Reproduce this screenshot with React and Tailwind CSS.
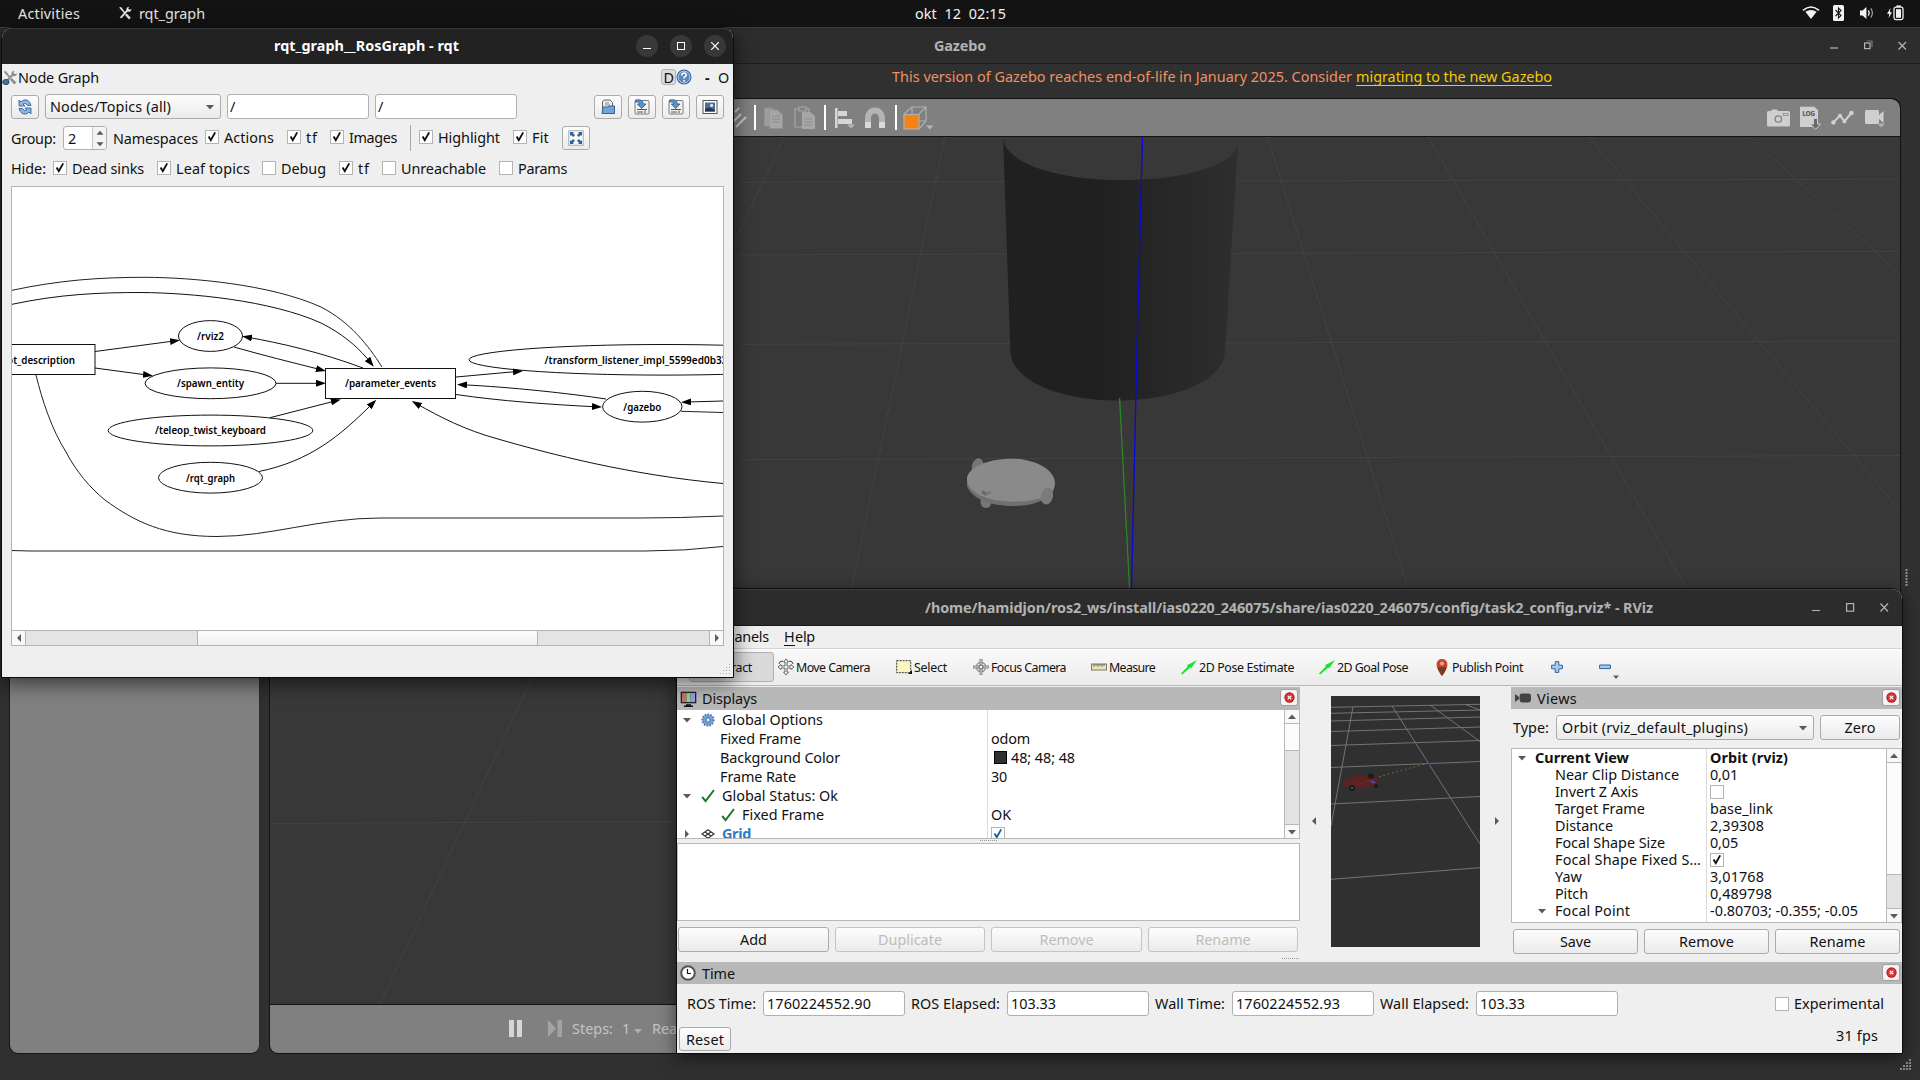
import React, { useLayoutEffect, useRef, useState } from "react";

/* Text run whose tracking is tuned so that it fills exactly `w` pixels. */
function Label({ w, className = "", children }) {
  const ref = useRef(null);
  const [spacing, setSpacing] = useState(0);
  useLayoutEffect(() => {
    const natural = ref.current.getBoundingClientRect().width;
    setSpacing((w - natural) / String(children).length);
  }, [w, children]);
  return (
    <span className={`block shrink-0 whitespace-pre ${className}`} style={{ width: w }}>
      <span ref={ref} style={{ letterSpacing: spacing }}>{children}</span>
    </span>
  );
}

/* ---------- small shared widgets ---------- */

function Check({ on, blue }) {
  return (
    <span className="block h-[14px] w-[14px] shrink-0 border border-[#b4b4b4] bg-white">
      {on && (
        <svg viewBox="0 0 12 12" className="block h-3 w-3">
          <path d="M2.6 5.4 L4.8 9.2 L9.2 1.4" fill="none" stroke={blue ? "#1f5fa8" : "#111"} strokeWidth="1.9" />
        </svg>
      )}
    </span>
  );
}

function CheckItem({ on, w, className = "", children }) {
  return (
    <div className={`mb-[2px] flex shrink-0 items-center gap-[5px] ${className}`}>
      <Check on={on} />
      <Label w={w}>{children}</Label>
    </div>
  );
}

function Tri({ dir = "down", className = "", color = "#5a5a5a" }) {
  const d = { down: "M0 2H8L4 6.5Z", up: "M0 6H8L4 1.5Z", left: "M6 0V8L2 4Z", right: "M2 0V8L6 4Z" }[dir];
  return (
    <svg viewBox="0 0 8 8" className={`block h-2 w-2 shrink-0 ${className}`}>
      <path d={d} fill={color} />
    </svg>
  );
}

function Button({ w, className = "", disabled, children }) {
  return (
    <div className={`flex shrink-0 items-center justify-center rounded-[3px] border bg-gradient-to-b from-[#fdfdfd] to-[#ebebeb] ${disabled ? "border-[#c4c4c4] text-[#bdbdbd]" : "border-[#ababab]"} ${className}`}>
      {w ? <Label w={w}>{children}</Label> : children}
    </div>
  );
}

function Field({ w, className = "", children }) {
  return (
    <div className={`flex h-[25px] shrink-0 items-center rounded-[3px] border border-[#b0b0b0] bg-white ${className}`}>
      <Label w={w}>{children}</Label>
    </div>
  );
}

function CloseBadge({ className = "" }) {
  return (
    <div className={`flex h-[17px] w-[18px] shrink-0 items-center justify-center rounded-[3px] border border-[#a0a0a0] bg-[#f4f4f4] ${className}`}>
      <svg viewBox="0 0 12 12" className="h-[11px] w-[11px]">
        <circle cx="6" cy="6" r="5.6" fill="#c4161c" />
        <circle cx="6" cy="6" r="4.4" fill="#d8393c" />
        <path d="M4.2 4.2L7.8 7.8M7.8 4.2L4.2 7.8" stroke="#fff" strokeWidth="1.3" />
      </svg>
    </div>
  );
}

function Tools({ className = "", light }) {
  const c = light ? "#e4e4e4" : "#8b8b8b";
  return (
    <svg viewBox="0 0 16 16" className={`block shrink-0 ${className}`} fill="none">
      <path d="M3 13.6L11 4.6" stroke={c} strokeWidth="2.2" />
      <path d="M9.6 4Q9.6 .8 13 .8L11.6 2.6L13.2 4.4L15.4 3.4Q15 6.8 12 6.6Q10 6.4 9.6 4Z" fill={c} />
      <path d="M1.2 1.8L3.6 1L8 7L7 8.2Z" fill={c} />
      <path d="M9 9.4L13.6 14.4" stroke={c} strokeWidth="2.8" />
      {!light && <ellipse cx="3.6" cy="12.8" rx="3.4" ry="2.8" fill="#47709f" stroke="#284a73" />}
    </svg>
  );
}

/* ---------- top panel ---------- */

function TopBar() {
  return (
    <header className="absolute inset-x-0 top-0 flex h-[27px] items-center bg-[#131313] pb-[1px] text-[#e6e6e6]">
      <Label w={62} className="ml-[18px]">Activities</Label>
      <Tools light className="ml-[38px] h-[14px] w-[14px]" />
      <Label w={66} className="ml-[7px]">rqt_graph</Label>
      <Label w={91} className="ml-[710px] text-[#f2f2f2]">{"okt  12  02:15"}</Label>
      <svg viewBox="0 0 18 14" className="ml-[796px] h-[14px] w-[18px] shrink-0">
        <path d="M1 4.4Q9 -2.4 17 4.4" fill="none" stroke="#f2f2f2" strokeWidth="1.5" />
        <path d="M3.4 5.8Q9 2 14.6 5.8L9 13Z" fill="#f2f2f2" />
      </svg>
      <svg viewBox="0 0 11 16" className="ml-[13px] h-4 w-[11px] shrink-0">
        <rect width="11" height="16" rx="1.5" fill="#f2f2f2" />
        <path d="M2.5 5L8 10.6L5.5 13V3L8 5.4L2.5 11" fill="none" stroke="#131313" strokeWidth="1.1" />
      </svg>
      <svg viewBox="0 0 16 14" className="ml-[15px] h-[14px] w-4 shrink-0">
        <path d="M1 4.6H3.6L7.4 1V13L3.6 9.4H1Z" fill="#f2f2f2" />
        <path d="M9.4 4.4Q11 7 9.4 9.6" fill="none" stroke="#f2f2f2" strokeWidth="1.3" />
        <path d="M11.8 2.4Q15 7 11.8 11.6" fill="none" stroke="#9a9a9a" strokeWidth="1.3" />
      </svg>
      <svg viewBox="0 0 17 16" className="ml-[12px] h-4 w-[17px] shrink-0">
        <path d="M3.6 3L0 8.8H2.2L1.6 13L5 7.2H2.8Z" fill="#f2f2f2" />
        <rect x="7" y="2.2" width="9" height="12.4" rx="1.8" fill="none" stroke="#f2f2f2" strokeWidth="1.3" />
        <rect x="9" y="4.2" width="5" height="8.6" fill="#f2f2f2" />
        <rect x="9.4" y="0.4" width="4.4" height="1.6" fill="#f2f2f2" />
      </svg>
    </header>
  );
}

/* ---------- Gazebo ---------- */

const GRID_LINES = [
  [740, 182.3, 1900, 179.2], [740, 254.9, 1900, 251.3], [740, 344.3, 1900, 341], [740, 459.7, 1900, 455.5],
  [270, 823.6, 680, 821.4],
  [1267.6, 137, 1407.7, 587], [1428.4, 137, 1685.5, 587], [1589, 137, 1900, 511], [1749.5, 137, 1900, 274],
  [944.8, 137, 852, 587], [783.8, 137, 380, 1004],
];

function GazeboScene() {
  return (
    <svg viewBox="270 137 1630 867" className="block h-[867px] w-full shrink-0">
      <defs>
        <linearGradient id="drum" x1="0" x2="1">
          <stop offset="0.4" stopColor="#202020" />
          <stop offset="1" stopColor="#2e2e2e" />
        </linearGradient>
      </defs>
      <rect x="270" y="137" width="1630" height="867" fill="#383838" />
      {GRID_LINES.map(([a, b, c, d], i) => (
        <line key={i} x1={a} y1={b} x2={c} y2={d} stroke="#434343" />
      ))}
      <path d="M1003 138C1006 164 1058 180 1122 180C1188 180 1236 164 1238 143L1225 353C1222 381 1175 400.5 1118 400.5C1060 400.5 1013 381 1010.5 353Z" fill="url(#drum)" />
      <line x1="1119.6" y1="398" x2="1129.5" y2="588" stroke="#2a8a2a" strokeWidth="1.2" />
      <path d="M1142.5 137L1137.2 340L1131.5 588" fill="none" stroke="#0909d8" strokeWidth="1.3" />
      <ellipse cx="977.5" cy="466" rx="5.5" ry="8" fill="#757575" transform="rotate(18 977.5 466)" />
      <ellipse cx="986" cy="502" rx="5.5" ry="6" fill="#777" />
      <path d="M967 480V486C972 499 990 506 1014 506C1032 506 1050 500 1054 489V480Z" fill="#707070" />
      <path d="M967 480C966 468 987 458.7 1011 458.7C1035 458.7 1055 470 1055 483C1055 495 1040 501.7 1014 501.7C988 501.7 968 493 967 480Z" fill="#8a8a8a" />
      <path d="M982 490L986.5 492.5V496L982 493.5Z" fill="#666" />
      <path d="M986.5 492.5L991 490V493.5L986.5 496Z" fill="#787878" />
      <ellipse cx="1047" cy="496" rx="6" ry="8.6" fill="#7b7b7b" transform="rotate(14 1047 496)" />
    </svg>
  );
}

function GazeboToolbar() {
  const sep = "h-[25px] w-[2px] shrink-0 bg-white";
  return (
    <div className="flex h-[37px] shrink-0 items-center rounded-tr-[9px] bg-[#808080]">
      <svg viewBox="0 0 16 24" className="ml-[461px] h-6 w-4 shrink-0" stroke="#c8c8c8" strokeWidth="2">
        <path d="M4 6L8 2M3 15L10 8M5 21L15 11" />
      </svg>
      <div className={`ml-[7px] ${sep}`} />
      <svg viewBox="0 0 19 22" className="ml-[8px] h-[22px] w-[19px] shrink-0" fill="#9d9d9d" stroke="#929292" strokeWidth=".6">
        <path d="M.5 1H8L12 4V19H.5Z" /><path d="M5.5 3H13L18.5 7.5V21.5H5.5Z" fill="#a6a6a6" />
        <path d="M8 9H16M8 12H16M8 15H16" stroke="#8c8c8c" strokeWidth="1" />
      </svg>
      <svg viewBox="0 0 22 24" className="ml-[11px] h-6 w-[22px] shrink-0" fill="none" stroke="#a6a6a6" strokeWidth="1.2">
        <path d="M1 3H5V5H12V3H15V21H1ZM5 1H12V5H5Z" />
        <path d="M8.5 6.5H16L20.5 10.5V22.5H8.5Z" fill="#a6a6a6" /><path d="M10.5 13H18M10.5 16H18M10.5 19H18" stroke="#8e8e8e" />
      </svg>
      <div className={`ml-[8px] ${sep}`} />
      <svg viewBox="0 0 20 22" className="ml-[9px] h-[22px] w-5 shrink-0" fill="#d6d6d6">
        <path d="M0 1H2.5V21H0ZM3 4H12V9H3ZM3 12H17V17H3Z" /><path d="M12 17.5H20L16 21.5Z" fill="#b6b6b6" />
      </svg>
      <svg viewBox="0 0 22 22" className="ml-[9px] h-[22px] w-[22px] shrink-0" fill="none">
        <path d="M4 19.5V11A7 7.6 0 0 1 18 11V19.5" stroke="#b4b4b4" strokeWidth="6" />
        <path d="M4 15V21M18 15V21" stroke="#dadada" strokeWidth="6" />
      </svg>
      <div className={`ml-[9px] ${sep}`} />
      <svg viewBox="0 0 31 24" className="ml-[6px] h-6 w-[31px] shrink-0" fill="none" stroke="#b0b0b0" strokeWidth="1.2">
        <path d="M1 8L9 1H23V15L16 23M16 8L23 1M9 1V15H23M9 15L1 23" />
        <rect x="1" y="8.5" width="15" height="14.5" fill="#f58212" />
        <path d="M23 19.5H30.5L26.7 23.5Z" fill="#b6b6b6" stroke="none" />
      </svg>
      <div className="flex-1" />
      <svg viewBox="0 0 23 18" className="h-[18px] w-[23px] shrink-0">
        <path d="M0 3.5Q0 2 1.5 2H4L5 .4H10L11 2H21.5Q23 2 23 3.5V16Q23 17.6 21.5 17.6H1.5Q0 17.6 0 16Z" fill="#cfcfcf" />
        <circle cx="11.3" cy="10" r="3.2" fill="none" stroke="#808080" strokeWidth="1.3" /><rect x="16" y="4.4" width="5" height="2.2" fill="none" stroke="#8a8a8a" strokeWidth=".8" />
      </svg>
      <svg viewBox="0 0 21 24" className="ml-[10px] h-6 w-[21px] shrink-0">
        <path d="M0 .8H14L18 4V21H0Z" fill="#cfcfcf" />
        <text x="2.2" y="9.6" fontFamily="Noto Sans" fontWeight="800" fontSize="6.6" fill="#606060" textLength="13">LOG</text>
        <path d="M13.5 12.5H17.5V18H20.5L15.5 23.5L10.5 18H13.5Z" fill="#6a6a6a" stroke="#cfcfcf" strokeWidth="1" />
      </svg>
      <svg viewBox="0 0 23 16" className="ml-[10px] h-4 w-[23px] shrink-0" fill="none" stroke="#d2d2d2" strokeWidth="2">
        <path d="M2.4 12.4L9 5.6L13.4 11.4L20.4 3" /><g fill="#d2d2d2" stroke="none"><circle cx="2.4" cy="12.4" r="2.2" /><circle cx="9" cy="5.6" r="1.9" /><circle cx="13.4" cy="11.4" r="1.9" /><circle cx="20.4" cy="3" r="2.2" /></g>
      </svg>
      <svg viewBox="0 0 21 20" className="mr-[14px] ml-[11px] mt-[3px] h-5 w-[21px] shrink-0" fill="#cfcfcf">
        <rect x="0" y="1" width="14" height="14" rx="1.5" /><path d="M13 7L18.5 2V14L13 9Z" /><path d="M12.5 14.5H20L16.2 18.5Z" fill="#b0b0b0" />
      </svg>
    </div>
  );
}

function GazeboWindow() {
  return (
    <section className="absolute inset-x-0 top-[27px] bottom-0 flex flex-col bg-[#303030]">
      <div className="flex h-[37px] shrink-0 items-center border-t border-b border-t-[#3c3c3c] border-b-[#1d1d1d] bg-[#2d2d2d] pb-[1px] text-[#b2b2b2]">
        <Label w={52} className="ml-[934px] font-bold">Gazebo</Label>
        <svg viewBox="0 0 80 14" className="ml-[844px] h-[14px] w-20 shrink-0" fill="none" stroke="#b4b4b4" strokeWidth="1.2">
          <path d="M0 10H8" /><rect x="34.6" y="5" width="5.4" height="5.6" /><path d="M37 3H42V9" stroke="#777" /><path d="M68.5 4L76 11.5M76 4L68.5 11.5" />
        </svg>
      </div>
      <div className="flex h-[34px] shrink-0 pt-[3px] text-[#f09060]">
        <Label w={460} className="ml-[892px]">This version of Gazebo reaches end-of-life in January 2025. Consider</Label>
        <Label w={196} className="ml-[4px] text-[#f0cc00] underline underline-offset-[3px]">migrating to the new Gazebo</Label>
      </div>
      <div className="flex min-h-0 flex-1">
        <div className="ml-[9px] h-[956px] w-[251px] shrink-0 rounded-b-[9px] border border-[#171717] border-r-[#2b2b2b] bg-[#808080]" />
        <div className="ml-[9px] flex h-[956px] w-[1632px] shrink-0 flex-col gap-px overflow-hidden rounded-tr-[9px] rounded-bl-[9px] border border-[#131313] bg-[#131313]">
          <GazeboToolbar />
          <GazeboScene />
          <div className="flex h-[48px] shrink-0 items-center bg-[#808080] pb-[2px] text-[#c4c4c4]">
            <div className="ml-[239px] flex gap-[3px]"><i className="h-[17px] w-[5px] bg-[#d6d6d6]" /><i className="h-[17px] w-[5px] bg-[#d6d6d6]" /></div>
            <svg viewBox="0 0 14 17" className="ml-[26px] h-[17px] w-[14px]" fill="#a3a3a3"><path d="M0 0L8 8.5L0 17ZM9.5 0H14V17H9.5Z" /></svg>
            <Label w={41} className="ml-[10px]">Steps:</Label>
            <Label w={7} className="ml-[9px]">1</Label>
            <Tri className="ml-[5px] mt-[6px]" color="#b0b0b0" />
            <Label w={25} className="ml-[10px]">Rea</Label>
          </div>
        </div>
        <svg viewBox="0 0 18 956" className="h-[956px] w-[18px] shrink-0 overflow-visible">
          <path d="M5.5 471V488" stroke="#909090" strokeWidth="2" strokeDasharray="2 1" />
          <g fill="#8a8a8a">
            <path d="M8 961h2v2h-2zM5 964h2v2h-2zM8 964h2v2h-2zM2 967h2v2h-2zM5 967h2v2h-2zM8 967h2v2h-2zM-1 970h2v2h-2zM2 970h2v2h-2zM5 970h2v2h-2zM8 970h2v2h-2z" />
          </g>
        </svg>
      </div>
    </section>
  );
}

/* ---------- RViz ---------- */

const SPRITES = {
  move: <g fill="none" stroke="#444" strokeWidth="1"><path d="M8 0L10.5 3H9V7H13V5.5L16 8L13 10.5V9H9V13H10.5L8 16L5.5 13H7V9H3V10.5L0 8L3 5.5V7H7V3H5.5Z" fill="#f4f4f4" strokeWidth=".8" /><path d="M1 5Q1 2 5 2M15 5Q15 2 11 2" /></g>,
  select: <g><rect x=".7" y="1.7" width="14" height="12" fill="#fdf5c0" stroke="#333" strokeDasharray="2 1" /><path d="M16 11V15H12Z" fill="#111" /></g>,
  focus: <g fill="none" stroke="#777" strokeWidth="1.1"><circle cx="8" cy="8" r="4.6" /><circle cx="8" cy="8" r="2" /><path d="M7 0H9V6H7ZM7 10H9V16H7ZM0 7H6V9H0ZM10 7H16V9H10Z" fill="#ddd" strokeWidth=".9" /></g>,
  measure: <g><rect x=".5" y="5" width="15" height="6" fill="#eee3b0" stroke="#777" /><path d="M3 5V8M5 5V7M7 5V8M9 5V7M11 5V8M13 5V7" stroke="#555" strokeWidth=".8" /></g>,
  arrow: <path d="M0 14.6L6.8 7.4L6 6.2L16 1L10.2 9.2L9.2 8.4L1.2 15.4Z" fill="#17e32c" />,
};

function Sprite({ name, className = "" }) {
  return <svg viewBox="0 0 16 16" className={`block h-4 w-4 shrink-0 ${className}`}>{SPRITES[name]}</svg>;
}

const TOOLS = [
  { icon: "move", text: "Move Camera", w: 74, next: "mr-[26px]" },
  { icon: "select", text: "Select", w: 33, next: "mr-[26px]" },
  { icon: "focus", text: "Focus Camera", w: 75, next: "mr-[25px]" },
  { icon: "measure", text: "Measure", w: 46, next: "mr-[26px]" },
  { icon: "arrow", text: "2D Pose Estimate", w: 95, next: "mr-[25px]" },
  { icon: "arrow", text: "2D Goal Pose", w: 71, next: "mr-[28px]" },
];

function RvizToolbar() {
  return (
    <div className="flex h-[38px] shrink-0 items-center border-t border-b border-t-[#d4d4d4] border-b-[#b8b8b8] bg-gradient-to-b from-[#fafafa] to-[#ebebeb] text-[12.4px]">
      <div className="mr-[4px] ml-[12px] flex h-[30px] w-[85px] shrink-0 items-center rounded-[3px] border border-[#b0b0b0] bg-[#dadada]">
        <Label w={43} className="ml-[19px]">Interact</Label>
      </div>
      {TOOLS.map((t) => (
        <div key={t.text} className={`flex shrink-0 items-center gap-[2px] ${t.next}`}>
          <Sprite name={t.icon} />
          <Label w={t.w}>{t.text}</Label>
        </div>
      ))}
      <svg viewBox="0 0 12 17" className="h-[17px] w-3 shrink-0">
        <path d="M6 17Q0 9 .6 5A5.4 5 0 0 1 11.4 5Q12 9 6 17Z" fill="#c0472b" /><path d="M6 17Q2 12 1.6 8H10.4Q10 12 6 17Z" fill="#7c3a1e" /><circle cx="6" cy="4.6" r="2" fill="#f0a08a" />
      </svg>
      <Label w={71} className="ml-[4px]">Publish Point</Label>
      <svg viewBox="0 0 12 12" className="ml-[28px] h-3 w-3 shrink-0"><path d="M4.2 .6H7.8V4.2H11.4V7.8H7.8V11.4H4.2V7.8H.6V4.2H4.2Z" fill="#a9c8e8" stroke="#3465a4" /></svg>
      <svg viewBox="0 0 12 12" className="ml-[36px] h-3 w-3 shrink-0"><path d="M.6 4H11.4V7.6H.6Z" fill="#a9c8e8" stroke="#3465a4" /></svg>
      <Tri className="ml-[1px] mt-[20px] scale-75" />
    </div>
  );
}

function ScrollV({ thumb }) {
  const cap = "flex h-[14px] shrink-0 items-center justify-center bg-[#f8f8f8]";
  return (
    <div className="flex w-[15px] shrink-0 flex-col border-l border-[#b8b8b8] bg-[#e3e3e3]">
      <div className={`${cap} border-b border-[#b8b8b8]`}><Tri dir="up" /></div>
      <div className={`shrink-0 border-b border-[#b8b8b8] bg-[#fbfbfb] ${thumb}`} />
      <div className="flex-1" />
      <div className={`${cap} border-t border-[#b8b8b8]`}><Tri /></div>
    </div>
  );
}

function Tick({ className = "" }) {
  return <svg viewBox="0 0 14 14" className={`block h-[14px] w-[14px] shrink-0 ${className}`}><path d="M1.2 8L4.6 12.2L13 1" fill="none" stroke="#1d7a2a" strokeWidth="2" /></svg>;
}

function Gear() {
  return (
    <svg viewBox="0 0 14 14" className="ml-[10px] block h-[14px] w-[14px] shrink-0">
      <circle cx="7" cy="7" r="5.6" fill="#7ba3d4" stroke="#4a78b4" strokeWidth="2" strokeDasharray="1.6 1.2" />
      <circle cx="7" cy="7" r="2.2" fill="#e4eefa" stroke="#3465a4" />
    </svg>
  );
}

function GridIcon() {
  return (
    <svg viewBox="0 0 14 12" className="ml-[10px] block h-3 w-[14px] shrink-0" fill="none" stroke="#333" strokeWidth="1.2">
      <path d="M7 1.8L13 6L7 10.2L1 6ZM4 3.9L10 8.1M10 3.9L4 8.1" />
    </svg>
  );
}

function TreeRow({ left, right, className = "h-[19px]", split = "w-[311px]" }) {
  return (
    <div className={`flex shrink-0 ${className}`}>
      <div className={`flex shrink-0 items-center border-r border-[#dadada] ${split}`}>{left}</div>
      <div className="flex items-center pl-[3px]">{right}</div>
    </div>
  );
}

function DisplaysPanel() {
  const text = "ml-[43px]";
  return (
    <div className="flex w-[623px] shrink-0 flex-col">
      <div className="flex h-[23px] shrink-0 items-center bg-[#b8b8b8]">
        <svg viewBox="0 0 17 16" className="ml-[3px] h-4 w-[17px]">
          <rect x=".7" y=".7" width="15.6" height="11.6" fill="#222" /><rect x="2" y="2" width="4.4" height="9" fill="#d06a70" /><rect x="6.4" y="2" width="4.2" height="9" fill="#86d88a" /><rect x="10.6" y="2" width="4.4" height="9" fill="#9a9af0" /><path d="M6 14H11M4 15.3H13" stroke="#111" strokeWidth="1.4" />
        </svg>
        <Label w={55} className="ml-[5px]">Displays</Label>
        <div className="flex-1" />
        <CloseBadge className="mr-[2px] mb-[3px]" />
      </div>
      <div className="flex h-[129px] shrink-0 border-r border-b border-[#b8b8b8] bg-white">
        <div className="flex flex-1 flex-col overflow-hidden">
          <TreeRow left={<><Tri className="ml-[6px]" /><Gear /><Label w={101} className="ml-[7px]">Global Options</Label></>} />
          <TreeRow left={<Label w={81} className={text}>Fixed Frame</Label>} right={<Label w={39}>odom</Label>} />
          <TreeRow left={<Label w={120} className={text}>Background Color</Label>} right={<><i className="ml-[3px] mr-[4px] h-[13px] w-[13px] border border-black bg-[#303030]" /><Label w={64}>48; 48; 48</Label></>} />
          <TreeRow left={<Label w={76} className={text}>Frame Rate</Label>} right={<Label w={16}>30</Label>} />
          <TreeRow left={<><Tri className="ml-[6px]" /><Tick className="ml-[10px]" /><Label w={116} className="ml-[7px]">Global Status: Ok</Label></>} />
          <TreeRow left={<><Tick className="ml-[44px]" /><Label w={82} className="ml-[7px]">Fixed Frame</Label></>} right={<Label w={20}>OK</Label>} />
          <TreeRow left={<><Tri dir="right" className="ml-[6px]" /><GridIcon /><Label w={29} className="ml-[7px] font-bold text-[#2a7ac8]">Grid</Label></>} right={<Check on blue />} />
        </div>
        <ScrollV thumb="h-[27px]" />
      </div>
      <div className="mx-auto mt-[1px] h-px w-[17px] shrink-0 border-t border-dotted border-[#999]" />
      <div className="mt-[2px] h-[78px] shrink-0 border border-[#b8b8b8] bg-white" />
      <div className="mt-[6px] flex h-[25px] shrink-0 gap-[6px] px-[1px]">
        <Button w={27} className="w-[151px]">Add</Button>
        <Button w={64} disabled className="w-[150px]">Duplicate</Button>
        <Button w={54} disabled className="w-[151px]">Remove</Button>
        <Button w={55} disabled className="w-[150px]">Rename</Button>
      </div>
      <div className="mt-[6px] mr-[1px] ml-auto h-px w-[17px] shrink-0 border-t border-dotted border-[#999]" />
    </div>
  );
}

const ORBIT_LINES = [
  [0, 11.3, 149, 8.3], [0, 17.3, 149, 14], [0, 25, 149, 21], [0, 35.5, 149, 31], [0, 49.5, 149, 44.5],
  [0, 71.5, 149, 65.5], [0, 108, 149, 100.5], [0, 183.3, 149, 171.7],
  [22, 11, 0, 130], [61, 10, 149, 148], [99, 9, 149, 45.5], [135, 8.7, 149, 14],
];

function OrbitView() {
  return (
    <div className="flex w-[211px] shrink-0">
      <Tri dir="left" className="mx-[10px] mt-[130px]" />
      <svg viewBox="0 0 149 251" className="mt-[9px] ml-[3px] block h-[251px] w-[149px] shrink-0 bg-[#303030]">
        {ORBIT_LINES.map(([a, b, c, d], i) => (
          <line key={i} x1={a} y1={b} x2={c} y2={d} stroke="#7c7c7c" strokeWidth=".9" />
        ))}
        <path d="M48 80.7L97.5 67" stroke="#80783a" strokeDasharray="1.5 3" />
        <path d="M96.5 66.5L99 69" stroke="#3a3ac0" strokeWidth="1.2" />
        <ellipse cx="29.5" cy="86" rx="17" ry="6.6" fill="#5c2223" transform="rotate(-6 29.5 86)" />
        <ellipse cx="40" cy="80" rx="3" ry="2.8" fill="#1a1a1a" /><ellipse cx="21" cy="92" rx="3" ry="3" fill="#1a1a1a" /><circle cx="45" cy="90" r="2" fill="#1a1a1a" />
        <path d="M26 88L41 84" stroke="#8a4038" strokeDasharray="1 2" /><path d="M20 92h2" stroke="#2c2" /><path d="M40 85l4 2" stroke="#4455cc" strokeWidth="1.6" />
      </svg>
      <Tri dir="right" className="mt-[130px] ml-[13px]" />
    </div>
  );
}

const VIEW_ROWS = [
  ["Near Clip Distance", 124, "0,01", 28],
  ["Invert Z Axis", 83, false],
  ["Target Frame", 90, "base_link", 63],
  ["Distance", 58, "2,39308", 54],
  ["Focal Shape Size", 110, "0,05", 28],
  ["Focal Shape Fixed S…", 146, true],
  ["Yaw", 27, "3,01768", 54],
  ["Pitch", 33, "0,489798", 62],
];

function ViewsPanel() {
  const row = "h-[17px]";
  const split = "w-[195px]";
  return (
    <div className="flex w-[391px] shrink-0 flex-col">
      <div className="flex h-[22px] shrink-0 items-center bg-[#b8b8b8]">
        <svg viewBox="0 0 16 10" className="ml-[4px] h-[10px] w-4" fill="#444"><path d="M0 1L4 4V6L0 9Z" /><rect x="4.6" y=".6" width="11.4" height="8.8" rx="2.4" /></svg>
        <Label w={40} className="ml-[6px]">Views</Label>
        <div className="flex-1" />
        <CloseBadge className="mr-[2px] mb-[2px]" />
      </div>
      <div className="mt-[6px] flex h-[25px] shrink-0 items-center pl-[2px]">
        <Label w={36}>Type:</Label>
        <div className="ml-[7px] flex h-[25px] w-[258px] items-center rounded-[3px] border border-[#ababab] bg-gradient-to-b from-[#fdfdfd] to-[#ebebeb]">
          <Label w={186} className="ml-[5px]">Orbit (rviz_default_plugins)</Label>
          <div className="flex-1" />
          <Tri className="mr-[6px]" />
        </div>
        <Button w={31} className="ml-[6px] h-[25px] w-[80px]">Zero</Button>
      </div>
      <div className="mt-[8px] flex h-[175px] shrink-0 border border-[#b8b8b8] bg-white">
        <div className="flex flex-1 flex-col overflow-hidden">
          <TreeRow className="h-[17px]" split={split} left={<><Tri className="ml-[6px]" /><Label w={94} className="ml-[9px] font-bold">Current View</Label></>} right={<Label w={78} className="font-bold">Orbit (rviz)</Label>} />
          {VIEW_ROWS.map(([name, w, value, vw]) => (
            <TreeRow key={name} className={row} split={split} left={<Label w={w} className="ml-[43px]">{name}</Label>} right={typeof value === "boolean" ? <Check on={value} /> : <Label w={vw}>{value}</Label>} />
          ))}
          <TreeRow className="h-[17px]" split={split} left={<><Tri className="ml-[26px]" /><Label w={75} className="ml-[9px]">Focal Point</Label></>} right={<Label w={148}>-0.80703; -0.355; -0.05</Label>} />
          <TreeRow className="h-[3px]" split={split} />
        </div>
        <ScrollV thumb="h-[112px]" />
      </div>
      <div className="mt-[6px] flex h-[25px] shrink-0 gap-[6px] pl-[2px]">
        <Button w={31} className="w-[125px]">Save</Button>
        <Button w={55} className="w-[125px]">Remove</Button>
        <Button w={56} className="w-[125px]">Rename</Button>
      </div>
    </div>
  );
}

function RvizWindow() {
  return (
    <section className="absolute top-[588px] left-[676px] flex h-[466px] w-[1227px] flex-col overflow-hidden rounded-t-[11px] border border-[#0c0c0c] bg-[#efefef] shadow-[0_4px_18px_rgba(0,0,0,0.5)]">
      <div className="flex h-[36px] shrink-0 items-center border-t border-[#3e3e3e] bg-[#2c2c2c] pb-[1px] text-[#b2b2b2]">
        <Label w={728} className="ml-[248px] font-bold">/home/hamidjon/ros2_ws/install/ias0220_246075/share/ias0220_246075/config/task2_config.rviz* - RViz</Label>
        <svg viewBox="0 0 80 14" className="ml-[159px] h-[14px] w-20 shrink-0" fill="none" stroke="#b4b4b4" strokeWidth="1.2">
          <path d="M0 10.5H8" /><rect x="34.6" y="3.6" width="7" height="7.6" /><path d="M68.5 3.5L76 11.5M76 3.5L68.5 11.5" />
        </svg>
      </div>
      <div className="flex h-[23px] shrink-0 items-center border-t border-[#181818] pb-[2px]">
        <Label w={43} className="ml-[49px]">Panels</Label>
        <span className="ml-[15px] flex"><Label w={11} className="underline underline-offset-[3px]">H</Label><Label w={20}>elp</Label></span>
      </div>
      <RvizToolbar />
      <div className="flex h-[276px] shrink-0 pt-[1px]">
        <DisplaysPanel />
        <OrbitView />
        <ViewsPanel />
      </div>
      <div className="flex h-[22px] shrink-0 items-center bg-[#b8b8b8]">
        <svg viewBox="0 0 16 16" className="ml-[3px] h-4 w-4"><circle cx="8" cy="8" r="6.8" fill="#fff" stroke="#555" strokeWidth="2" /><path d="M7.5 4V8.5H11" fill="none" stroke="#111" strokeWidth="1.2" /></svg>
        <Label w={33} className="ml-[6px]">Time</Label>
        <div className="flex-1" />
        <CloseBadge className="mr-[2px] mb-[2px]" />
      </div>
      <div className="mt-[7px] flex h-[25px] shrink-0 items-center">
        <Label w={69} className="ml-[10px]">ROS Time:</Label>
        <Field w={104} className="ml-[7px] w-[142px] pl-[3px]">1760224552.90</Field>
        <Label w={89} className="ml-[6px]">ROS Elapsed:</Label>
        <Field w={45} className="ml-[7px] w-[142px] pl-[3px]">103.33</Field>
        <Label w={70} className="ml-[6px]">Wall Time:</Label>
        <Field w={104} className="ml-[7px] w-[142px] pl-[3px]">1760224552.93</Field>
        <Label w={89} className="ml-[6px]">Wall Elapsed:</Label>
        <Field w={45} className="ml-[7px] w-[142px] pl-[3px]">103.33</Field>
        <CheckItem w={90} className="mt-[2px] ml-[157px]">Experimental</CheckItem>
      </div>
      <div className="mt-[11px] flex h-[24px] shrink-0 items-center">
        <Button w={38} className="ml-[2px] h-[24px] w-[52px]">Reset</Button>
        <Label w={42} className="mb-[8px] ml-[1105px]">31 fps</Label>
      </div>
    </section>
  );
}

/* ---------- rqt ---------- */

function Edge({ d }) {
  return <path d={d} fill="none" stroke="#111" strokeWidth="1" markerEnd="url(#head)" />;
}

function GraphText({ x, y, w, anchor = "middle", children }) {
  return (
    <text x={x} y={y + 3.8} textAnchor={anchor} textLength={w} lengthAdjust="spacingAndGlyphs" fontFamily="Noto Sans" fontSize="10" fontWeight="600">{children}</text>
  );
}

const NODES = [
  ["/rviz2", 210.5, 336, 32, 27],
  ["/spawn_entity", 210.5, 383.3, 65.5, 67],
  ["/teleop_twist_keyboard", 210.5, 430.5, 102.3, 111],
  ["/rqt_graph", 210.5, 477.7, 52, 49],
  ["/gazebo", 642.3, 406.7, 39.7, 38],
];

const ARROWS = [
  "M11 304.5C60 294 100 292.5 142 292.5C190 293 270 300 321 323C343 334 356 346 366 357L370 362",
  "M95 351.5L174 341",
  "M95 368L147 375",
  "M234 347C262 355 290 362 320 369.5",
  "M363 368C320 352 280 343 248 337.3",
  "M276 383.3H320",
  "M270 417.7L335 401",
  "M259 471.5C310 461 340 436 372 404",
  "M456 377L517 371.5",
  "M606 399C570 393.5 510 387 463 384.8",
  "M456 394.5C500 401 550 404.5 596 406.8",
  "M723 401L687 402",
  "M723 483.5C630 475 550 454 498 439C465 430 440 417 417 404",
];

const CURVES = [
  "M11 290.5C60 280 100 277.3 146 277.3C190 277.5 270 284 321 307C350 322 368 345 382 367",
  "M681 411.3L723 412.5",
  "M36 375C42 400 52 430 66 452C76 471 90 488 105 500C135 522 165 536.5 217 536.5C270 536.5 320 518 380 518H640Q680 518 723 516",
  "M11 550.5L30 551H645Q685 551 723 546.5",
];

function NodeGraph() {
  return (
    <svg viewBox="12 187 711 443" className="block h-[443px] w-[711px] shrink-0 bg-white">
      <defs>
        <marker id="head" viewBox="0 0 10 7" refX="4" refY="3.5" markerWidth="10" markerHeight="7" orient="auto" markerUnits="userSpaceOnUse">
          <path d="M0 0L10 3.5L0 7Z" fill="#000" />
        </marker>
      </defs>
      {CURVES.map((d) => <path key={d} d={d} fill="none" stroke="#222" />)}
      <g fill="#fff" stroke="#111">
        <rect x="-60" y="344.5" width="155" height="30" />
        <rect x="325.5" y="368.5" width="130" height="30" />
        <ellipse cx="664" cy="359.8" rx="195" ry="15.3" />
        {NODES.map(([t, x, y, rx]) => <ellipse key={t} cx={x} cy={y} rx={rx} ry="15.4" />)}
      </g>
      {ARROWS.map((d) => <Edge key={d} d={d} />)}
      <GraphText x="75" y={359.7} w={88} anchor="end">/robot_description</GraphText>
      <GraphText x="390.5" y={383.5} w={91}>/parameter_events</GraphText>
      <GraphText x="544.6" y={359.9} w={238} anchor="start">/transform_listener_impl_5599ed0b33d0a8f1c2e0</GraphText>
      {NODES.map(([t, x, y, , w]) => <GraphText key={t} x={x} y={y} w={w}>{t}</GraphText>)}
    </svg>
  );
}

function IconButton({ className = "", children }) {
  return (
    <Button className={`h-[24px] w-[28px] ${className}`}>
      <svg viewBox="0 0 16 16" className="h-4 w-4">{children}</svg>
    </Button>
  );
}

function SaveAs() {
  return (
    <g>
      <rect x="1" y="1.5" width="14" height="13.5" rx="1" fill="#f2f2f0" stroke="#7a7a7a" />
      <path d="M3 10.5H13M3 13H9M11 11.5V14" stroke="#555" strokeWidth="1.1" />
      <path d="M1.5 1Q9 -.5 9.4 5H12L7.6 9.6L3.4 5H6Q6 2.6 1.5 3Z" fill="#5a94cc" stroke="#245a94" strokeWidth=".8" />
    </g>
  );
}

function RqtWindow() {
  const disc = "flex h-[22px] w-[22px] shrink-0 items-center justify-center rounded-full bg-[#383838]";
  return (
    <section className="absolute top-[27px] left-px flex h-[651px] w-[733px] flex-col overflow-hidden rounded-t-[11px] border border-[#0c0c0c] bg-[#efefef] shadow-[0_5px_20px_rgba(0,0,0,0.6)]">
      <div className="flex h-[36px] shrink-0 items-center border-t border-[#383838] bg-[#222] pb-[2px] text-white">
        <Label w={185} className="ml-[272px] font-bold">rqt_graph__RosGraph - rqt</Label>
        <div className={`ml-[177px] ${disc}`}><i className="mt-[5px] h-px w-2 bg-white" /></div>
        <div className={`ml-[12px] ${disc}`}><i className="h-2 w-2 border border-white" /></div>
        <div className={`ml-[12px] ${disc}`}>
          <svg viewBox="0 0 8 8" className="h-2 w-2" stroke="#fff" strokeWidth="1.2"><path d="M0 0L8 8M8 0L0 8" /></svg>
        </div>
      </div>
      <div className="flex h-[28px] shrink-0 items-center pb-[2px]">
        <Tools className="h-[15px] w-4" />
        <Label w={81}>Node Graph</Label>
        <div className="ml-[562px] flex h-[16px] w-[15px] items-center justify-center rounded-[3px] border border-[#b4b4b4] bg-[#dcdcdc]"><Label w={10}>D</Label></div>
        <svg viewBox="0 0 16 16" className="h-4 w-4 shrink-0">
          <circle cx="8" cy="8" r="7.5" fill="#2f5f9f" /><circle cx="8" cy="8" r="6" fill="#5b87c0" stroke="#dfe9f5" strokeWidth=".8" />
          <path d="M5.8 6.4Q5.8 4 8 4Q10.3 4 10.2 6Q10 7.4 8.2 8.2V9.6M8.2 11V12.6" fill="none" stroke="#fff" strokeWidth="1.6" />
        </svg>
        <Label w={6} className="ml-[13px] font-bold">-</Label>
        <Label w={11} className="ml-[7px]">O</Label>
      </div>
      <div className="mt-[2px] flex h-[25px] shrink-0 items-center">
        <IconButton className="ml-[9px]">
          <path d="M2 1V7H8L6 5Q8.6 3 10.4 6.4H14Q12 0 7 1Q5 1.6 4 3Z" fill="#8fb6dc" stroke="#2d64a0" strokeWidth=".9" />
          <path d="M14 15V9H8L10 11Q7.4 13 5.6 9.6H2Q4 16 9 15Q11 14.4 12 13Z" fill="#8fb6dc" stroke="#2d64a0" strokeWidth=".9" />
        </IconButton>
        <div className="ml-[6px] flex h-[25px] w-[176px] shrink-0 items-center rounded-[3px] border border-[#ababab] bg-gradient-to-b from-[#fdfdfd] to-[#ebebeb]">
          <Label w={121} className="ml-[4px]">Nodes/Topics (all)</Label>
          <div className="flex-1" />
          <Tri className="mr-[6px]" />
        </div>
        <Field w={6} className="ml-[6px] w-[142px] pl-[2px]">/</Field>
        <Field w={6} className="ml-[6px] w-[142px] pl-[2px]">/</Field>
        <IconButton className="ml-[77px]">
          <path d="M2.5 13V2.5Q3 1 5 1H10L12.5 3.5V9" fill="#eee" stroke="#666" /><path d="M5 4H9M5 6H10" stroke="#888" />
          <path d="M3 8H8L9 7H14.5V14.5H2Z" fill="#74a3d6" stroke="#2d64a0" />
        </IconButton>
        <IconButton className="ml-[6px]"><SaveAs /></IconButton>
        <IconButton className="ml-[6px]"><SaveAs /></IconButton>
        <IconButton className="ml-[6px]">
          <rect x="1" y="1.5" width="14" height="13" fill="#fff" stroke="#555" /><rect x="3" y="3.5" width="10" height="9" fill="#4a6d9c" /><path d="M3 12.5V10L7 8.5L13 11V12.5Z" fill="#24344e" /><circle cx="9.6" cy="6.4" r="1.6" fill="#d8e2f0" />
        </IconButton>
      </div>
      <div className="mt-[7px] flex h-[24px] shrink-0 items-center">
        <Label w={45} className="ml-[9px]">Group:</Label>
        <div className="ml-[7px] flex h-[24px] w-[44px] shrink-0 items-center overflow-hidden rounded-[3px] border border-[#b0b0b0] bg-white">
          <Label w={8} className="ml-[4px]">2</Label>
          <div className="ml-[16px] flex h-full flex-1 flex-col items-center justify-around border-l border-[#c8c8c8] bg-[#f4f4f4]"><Tri dir="up" className="scale-90" /><Tri className="scale-90" /></div>
        </div>
        <Label w={85} className="ml-[6px]">Namespaces</Label>
        <CheckItem on w={50} className="ml-[7px]">Actions</CheckItem>
        <CheckItem on w={12} className="ml-[13px]">tf</CheckItem>
        <CheckItem on w={48} className="ml-[12px]">Images</CheckItem>
        <i className="ml-[13px] h-[26px] w-px shrink-0 bg-[#a8a8a8]" />
        <CheckItem on w={62} className="ml-[8px]">Highlight</CheckItem>
        <CheckItem on w={17} className="ml-[13px]">Fit</CheckItem>
        <IconButton className="ml-[13px]">
          <rect x=".8" y=".8" width="14.4" height="14.4" fill="#fafafa" stroke="#999" strokeWidth=".8" />
          <path d="M2 2H6L4.9 3.1L7 5.2L5.2 7L3.1 4.9L2 6ZM14 2V6L12.9 4.9L10.8 7L9 5.2L11.1 3.1L10 2ZM2 14V10L3.1 11.1L5.2 9L7 10.8L4.9 12.9L6 14ZM14 14H10L11.1 12.9L9 10.8L10.8 9L12.9 11.1L14 10Z" fill="#2d64a0" />
        </IconButton>
      </div>
      <div className="mt-[6px] flex h-[26px] shrink-0 items-center">
        <Label w={35} className="mb-[2px] ml-[9px]">Hide:</Label>
        <CheckItem on w={72} className="ml-[7px]">Dead sinks</CheckItem>
        <CheckItem on w={74} className="ml-[13px]">Leaf topics</CheckItem>
        <CheckItem w={45} className="ml-[12px]">Debug</CheckItem>
        <CheckItem on w={12} className="ml-[13px]">tf</CheckItem>
        <CheckItem w={85} className="ml-[12px]">Unreachable</CheckItem>
        <CheckItem w={49} className="ml-[13px]">Params</CheckItem>
      </div>
      <div className="mt-[4px] ml-[9px] flex h-[460px] w-[713px] shrink-0 flex-col border border-[#b4b4b4] bg-white">
        <NodeGraph />
        <div className="flex h-[15px] shrink-0 border-t border-[#b4b4b4] bg-[#e4e4e4]">
          <div className="flex w-[14px] items-center justify-center border-r border-[#b4b4b4] bg-[#f8f8f8]"><Tri dir="left" /></div>
          <div className="ml-[171px] w-[341px] border-x border-[#b4b4b4] bg-gradient-to-b from-[#fdfdfd] to-[#f0f0f0]" />
          <div className="flex-1" />
          <div className="flex w-[14px] items-center justify-center border-l border-[#b4b4b4] bg-[#f8f8f8]"><Tri dir="right" /></div>
        </div>
      </div>
      <svg viewBox="0 0 11 11" className="mt-[18px] mr-[2px] ml-auto h-[11px] w-[11px] shrink-0">
        <path d="M9 0h1v1h-1zM6 3h1v1h-1zM9 3h1v1h-1zM3 6h1v1h-1zM6 6h1v1h-1zM9 6h1v1h-1zM0 9h1v1h-1zM3 9h1v1h-1zM6 9h1v1h-1zM9 9h1v1h-1z" fill="#aaa" />
      </svg>
    </section>
  );
}

export default function App() {
  return (
    <main className="relative h-[1080px] w-[1920px] overflow-hidden bg-[#1a1a1a] font-['Noto_Sans',sans-serif] text-[14.4px] leading-[19px] text-[#111]">
      <GazeboWindow />
      <TopBar />
      <RvizWindow />
      <RqtWindow />
    </main>
  );
}
